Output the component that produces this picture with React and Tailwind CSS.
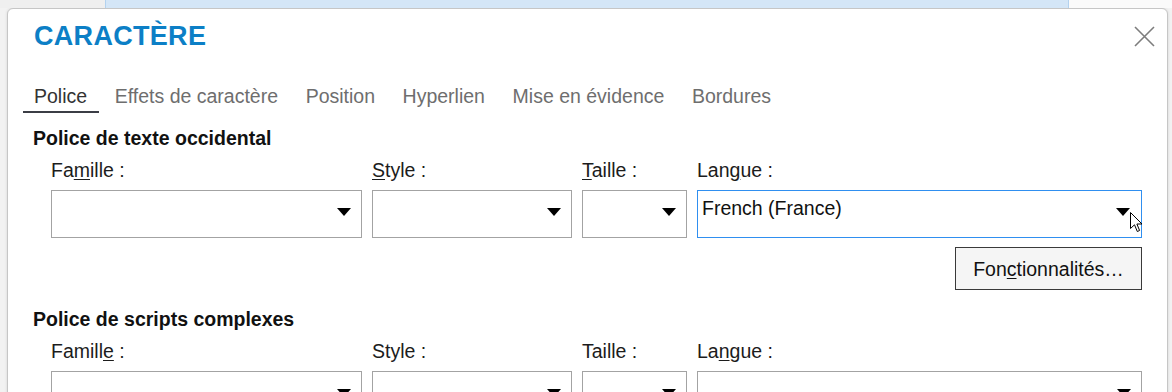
import React from 'react'

const font = { fontFamily: '"Liberation Sans", Arial, sans-serif' }

function Arrow() {
  return (
    <svg width="14" height="8" viewBox="0 0 14 8" className="mt-[12px] ml-auto shrink-0">
      <polygon points="0,0 14,0 7,8" fill="#000" />
    </svg>
  )
}

function Combo({ children, active, cursor }) {
  return (
    <div
      className={`relative flex items-start h-[48px] pt-[5px] pl-[4px] bg-white border ${
        active ? 'border-[#2f8ff0] pr-[11px]' : 'border-[#a3a3a3] pr-[10px]'
      }`}
    >
      <span className="leading-[24px] text-[#111]">{children}</span>
      <Arrow />
      {cursor && (
        <svg width="13" height="21" viewBox="0 0 13 21" className="absolute left-[432px] top-[21px]">
          <path d="M0.5 0.5 L0.5 16.5 L4.5 12.8 L7.3 19.5 L9.6 18.5 L6.9 12 L12 12 Z" fill="#fff" stroke="#000" strokeWidth="1" />
        </svg>
      )}
    </div>
  )
}

const tabs = ['Police', 'Effets de caractère', 'Position', 'Hyperlien', 'Mise en évidence', 'Bordures']

function Section({ title, labels, first }) {
  return (
    <>
      <div className="pl-[25px] font-bold leading-[24px] text-[#111]">{title}</div>
      <div className="ml-[43px] mt-[8px] w-[1091px] grid grid-cols-[311px_200px_105px_445px] gap-x-[10px] gap-y-[8px]">
        {labels.map((l, i) => (
          <div key={i} className="leading-[24px] text-[#1c1c1c]">{l}</div>
        ))}
        <Combo />
        <Combo />
        <Combo />
        <Combo active={first} cursor={first}>{first ? 'French (France)' : ''}</Combo>
      </div>
    </>
  )
}

export default function App() {
  return (
    <div className="w-[1172px] h-[392px] overflow-hidden bg-[#f2f2f2] text-[19.5px]" style={font}>
      {/* window behind */}
      <div className="flex h-[8px]">
        <div className="w-[105px] bg-[#efefef]" />
        <div className="w-[964px] bg-[#d4e6f7] border-l border-r border-[#b3d2ef]" />
        <div className="flex-1 bg-[#fafafa]" />
      </div>

      {/* Dialog */}
      <div className="ml-[7px] w-[1161px] h-[420px] bg-white border border-[#c6c6c6] rounded-t-[6px] shadow-[0_0_3px_rgba(0,0,0,0.12)]">
        <div className="flex items-start justify-between pt-[11px] pl-[26px] pr-[12px]">
          <h1 className="text-[27px] leading-[32px] font-bold text-[#0c7fc6] tracking-[0.3px]">CARACTÈRE</h1>
          <svg width="21" height="21" viewBox="0 0 21 21" className="mt-[6px]">
            <path d="M1 1 L20 20 M20 1 L1 20" stroke="#7d7d7d" strokeWidth="1.6" />
          </svg>
        </div>

        {/* Tabs */}
        <div className="flex gap-[4.6px] pl-[15px] mt-[32px]">
          {tabs.map((t, i) => (
            <div
              key={t}
              className={`pl-[11px] pr-[12px] pb-[3px] leading-[24px] border-b-2 ${
                i === 0 ? 'border-[#3b3d45] text-[#333]' : 'border-transparent text-[#6e6e6e]'
              }`}
            >
              {t}
            </div>
          ))}
        </div>

        <div className="mt-[13px] flex flex-col">
          <Section
            first
            title="Police de texte occidental"
            labels={[
              <>Fa<u className="underline-offset-2">m</u>ille :</>,
              <><u className="underline-offset-2">S</u>tyle :</>,
              <><u className="underline-offset-2">T</u>aille :</>,
              <>Lan<u className="underline-offset-2">g</u>ue :</>,
            ]}
          />

          <div className="w-[1134px] flex justify-end mt-[9px]">
            <button className="w-[187px] h-[43px] border border-[#3a3a3a] bg-[#f5f5f5] text-[#111] leading-[24px]">
              Fon<u className="underline-offset-2">c</u>tionnalités…
            </button>
          </div>

          <div className="mt-[17px]">
            <Section
              title="Police de scripts complexes"
              labels={[
                <>Famill<u className="underline-offset-2">e</u> :</>,
                <>Style :</>,
                <>Taille :</>,
                <>La<u className="underline-offset-2">n</u>gue :</>,
              ]}
            />
          </div>
        </div>
      </div>
    </div>
  )
}
